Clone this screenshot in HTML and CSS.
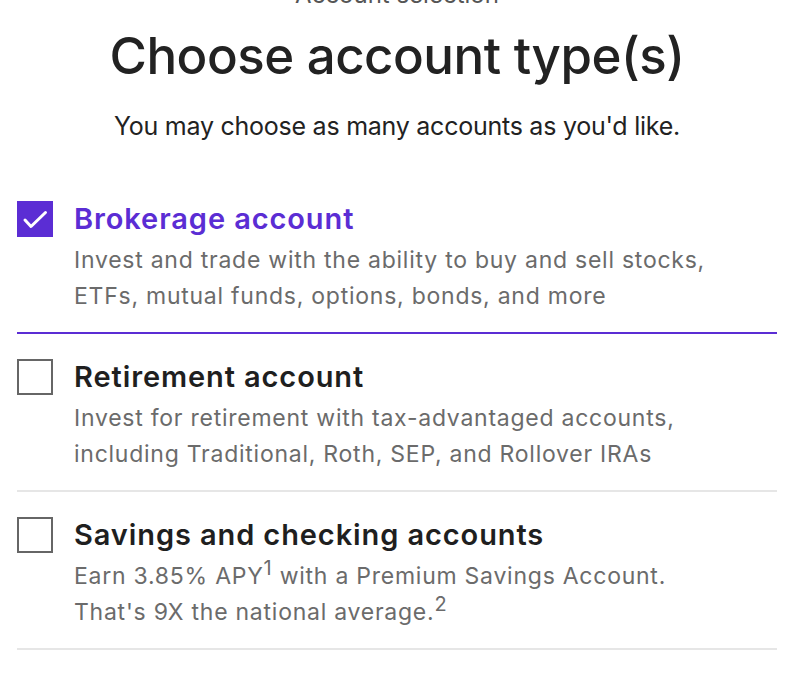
FILE: index.html
```html
<!DOCTYPE html>
<html lang="en">
<head>
<meta charset="utf-8">
<title>Choose account type(s)</title>
<link rel="stylesheet" href="styles.css">
</head>
<body>
<main class="page">
  <header class="head">
    <p class="eyebrow">Account selection</p>
    <h1 class="title">Choose account type(s)</h1>
    <p class="lead">You may choose as many accounts as you'd like.</p>
  </header>
  <ul class="options">
    <li class="option option--checked">
      <span class="box box--checked">
        <svg viewBox="0 0 36 36" width="36" height="36" aria-hidden="true"><polyline points="8,19 14,25.5 28.5,11.5" fill="none" stroke="#fff" stroke-width="3" stroke-linecap="round" stroke-linejoin="round"/></svg>
      </span>
      <div class="text">
        <h2 class="name name--checked">Brokerage account</h2>
        <p class="desc">Invest and trade with the ability to buy and sell stocks, ETFs, mutual funds, options, bonds, and more</p>
      </div>
    </li>
    <li class="option">
      <span class="box"></span>
      <div class="text">
        <h2 class="name">Retirement account</h2>
        <p class="desc">Invest for retirement with tax-advantaged accounts, including Traditional, Roth, SEP, and Rollover IRAs</p>
      </div>
    </li>
    <li class="option">
      <span class="box"></span>
      <div class="text">
        <h2 class="name">Savings and checking accounts</h2>
        <p class="desc">Earn 3.85% APY<sup>1</sup> with a Premium Savings Account.<br>That's 9X the national average.<sup>2</sup></p>
      </div>
    </li>
  </ul>
</main>
</body>
</html>
```

FILE: styles.css
```css
* { box-sizing: border-box; }
html, body { margin: 0; padding: 0; background: #fff; }
body {
  font-family: Inter, "Noto Sans", "Liberation Sans", sans-serif;
  color: #1f1f1f;
}
.page {
  padding: 0 13px 0 17px;
}
.head {
  text-align: center;
  margin-top: -20px;
}
.eyebrow {
  margin: 0;
  font-size: 24px;
  line-height: 30px;
  color: #555;
}
.title {
  margin: 14px 0 0;
  font-size: 51px;
  line-height: 64px;
  font-weight: 500;
  letter-spacing: -0.5px;
  color: #222;
}
.lead {
  margin: 22px 0 0;
  font-size: 25px;
  line-height: 32px;
  letter-spacing: -0.25px;
  color: #222;
}
.options {
  list-style: none;
  margin: 34px 0 0;
  padding: 0;
}
.option {
  display: flex;
  gap: 21px;
  padding: 25px 0 18px;
  border-bottom: 2px solid #e6e6e6;
}
.option--checked {
  border-bottom-color: #5b2dd4;
}
.box {
  flex: 0 0 36px;
  width: 36px;
  height: 36px;
  border: 2px solid #666;
  background: #fff;
}
.box--checked {
  border: none;
  background: #5b2dd4;
}
.box svg { display: block; }
.text { flex: 1; }
.name {
  margin: 0;
  font-size: 29px;
  line-height: 36px;
  font-weight: 600;
  letter-spacing: 0.9px;
  color: #1f1f1f;
}
.name--checked { color: #5b2dd4; }
.desc {
  margin: 5px 0 0;
  font-size: 23px;
  line-height: 36px;
  letter-spacing: 0.75px;
  color: #6b6b6b;
  max-width: 680px;
}
.desc sup {
  font-size: 20px;
  line-height: 0;
  vertical-align: 9px;
}
```
